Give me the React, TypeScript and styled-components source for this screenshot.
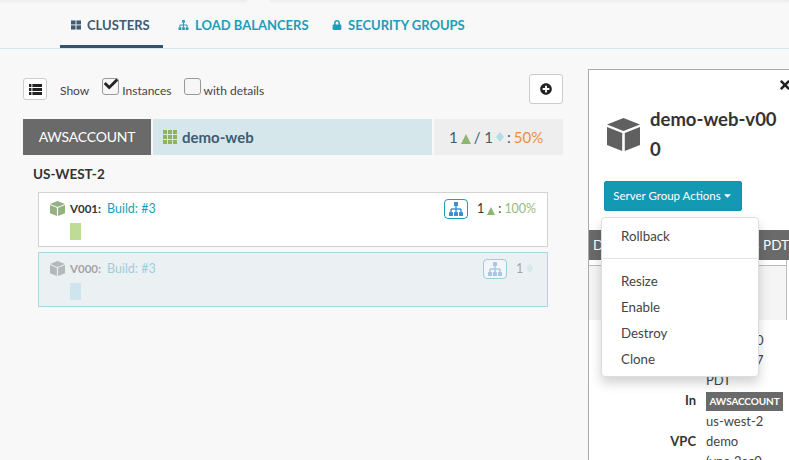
import React from "react";
import styled, { createGlobalStyle } from "styled-components";
import { FaLock, FaPlusCircle, FaTimes, FaCheck, FaCaretDown } from "react-icons/fa";

const Global = createGlobalStyle`
  html, body { margin: 0; padding: 0; height: 460px; overflow: hidden; background: #f8f8f8; }
  body { font-family: Lato, "Liberation Sans", sans-serif; color: #333; }
`;

const Page = styled.div`
  width: 789px;
  height: 460px;
  position: relative;
  overflow: hidden;
  display: flex;
  flex-direction: column;
  background: linear-gradient(#ececec 0, #f8f8f8 4px);
  &::before {
    content: "";
    position: absolute;
    left: 245px;
    top: 0;
    width: 27px;
    height: 3px;
    background: #f8f8f8;
    clip-path: polygon(3px 0, 24px 0, 100% 100%, 0 100%);
  }
`;

const Nav = styled.nav`
  height: 49px;
  box-sizing: border-box;
  flex: none;
  display: flex;
  padding-left: 60px;
  border-bottom: 1px solid #d3e7ee;
`;

const Tab = styled.a<{ $active?: boolean; $w: number }>`
  width: ${(p) => p.$w}px;
  height: 48px;
  box-sizing: border-box;
  margin-right: ${(p) => (p.$active ? 15 : 26)}px;
  padding: 17px 0 0 ${(p) => (p.$active ? 11 : 0)}px;
  display: flex;
  align-items: flex-start;
  gap: 6px;
  font-size: 13px;
  font-weight: 700;
  line-height: 16px;
  white-space: nowrap;
  color: ${(p) => (p.$active ? "#3f5b73" : "#1b9eb9")};
  border-bottom: ${(p) => (p.$active ? "3px solid #35536d" : "none")};
  svg { flex: none; margin-top: 3px; }
`;

const Body = styled.div`
  flex: 1;
  min-height: 0;
  display: flex;
`;

const Left = styled.div`
  width: 540px;
  margin-left: 23px;
  flex: none;
  padding-top: 25px;
`;

const Toolbar = styled.div`
  height: 30px;
  display: flex;
  align-items: center;
  font-size: 12px;
  color: #444;
`;

const IconButton = styled.button<{ $w: number; $h: number }>`
  width: ${(p) => p.$w}px;
  height: ${(p) => p.$h}px;
  padding: 0;
  display: flex;
  align-items: center;
  justify-content: center;
  background: #fff;
  border: 1px solid #ccc;
  border-radius: 3px;
  color: #222;
`;

const ShowLabel = styled.span`
  margin: 2px 0 0 13px;
`;

const CheckLabel = styled.label<{ $ml: number }>`
  display: flex;
  align-items: flex-start;
  margin-left: ${(p) => p.$ml}px;
`;

const Box = styled.span`
  width: 15px;
  height: 15px;
  display: block;
  background: #f6f6f6;
  border: 1px solid #999;
  border-radius: 3px;
  position: relative;
  top: -3px;
  svg { position: absolute; left: 1px; top: -2px; color: #222; }
`;

const CheckText = styled.span`
  margin-left: 3px;
  margin-top: 2px;
`;

const Spacer = styled.div`
  flex: 1;
`;

const HeaderRow = styled.div`
  margin-top: 15px;
  height: 36px;
  display: flex;
  gap: 2px;
`;

const Account = styled.div`
  width: 128px;
  background: #6a6a6a;
  color: #fff;
  font-size: 14px;
  line-height: 36px;
  text-align: center;
  letter-spacing: -0.2px;
`;

const AppName = styled.div`
  flex: 1;
  background: #d6e7ec;
  display: flex;
  align-items: center;
  gap: 5px;
  padding-left: 10px;
  font-size: 15px;
  font-weight: 700;
  color: #3f5b73;
`;

const Health = styled.div`
  width: 129px;
  box-sizing: border-box;
  background: #eeeeee;
  display: flex;
  align-items: center;
  gap: 3px;
  padding-left: 15px;
  font-size: 15px;
  color: #3f5b73;
`;

const Orange = styled.span`
  color: #ec8f3c;
`;

const Region = styled.div`
  margin: 10px 0 0 10px;
  font-size: 13.5px;
  font-weight: 700;
  line-height: 18px;
  color: #333;
`;

const Groups = styled.div`
  margin: 9px 15px 0;
  display: flex;
  flex-direction: column;
  gap: 5px;
`;

const Group = styled.div<{ $off?: boolean }>`
  height: 55px;
  box-sizing: border-box;
  padding: 7px 11px 0 11px;
  background: ${(p) => (p.$off ? "#ebf0f3" : "#fff")};
  border: 1px solid ${(p) => (p.$off ? "#a9d8e4" : "#d2d2d2")};
`;

const GroupTop = styled.div<{ $off?: boolean }>`
  height: 17px;
  display: flex;
  align-items: center;
  font-size: 12.5px;
  opacity: ${(p) => (p.$off ? 0.4 : 1)};
`;

const GroupName = styled.b`
  margin-left: 5px;
  font-weight: 700;
  font-size: 11.5px;
  color: #333;
`;

const BuildLink = styled.span`
  margin-left: 6px;
  color: #1b9eb9;
`;

const LbBadge = styled.span`
  width: 24px;
  height: 20px;
  box-sizing: border-box;
  display: flex;
  align-items: center;
  justify-content: center;
  border: 1px solid #1b9eb9;
  border-radius: 4px;
  color: #3d8fcf;
  background: #fff;
`;

const Count = styled.span<{ $w: number }>`
  width: ${(p) => p.$w}px;
  margin-left: 9px;
  display: flex;
  align-items: center;
  gap: 3px;
  white-space: nowrap;
  color: #333;
  svg { flex: none; }
`;

const Green = styled.span`
  color: #9ab981;
`;

const Instance = styled.div<{ $off?: boolean }>`
  margin: 6px 0 0 20px;
  width: 11px;
  height: 17px;
  background: ${(p) => (p.$off ? "#cfe5ed" : "#bfdc97")};
`;

const Panel = styled.aside`
  margin: 20px 0 0 25px;
  flex: 1;
  min-width: 0;
  position: relative;
  background: #fff;
  border: 1px solid #aaa;
  border-right: none;
  border-bottom: none;
  display: flex;
  flex-direction: column;
`;

const Close = styled.span`
  position: absolute;
  right: -3px;
  top: 8px;
  color: #222;
  line-height: 0;
`;

const PanelHead = styled.div`
  margin-top: 34px;
  display: flex;
  padding-left: 18px;
  gap: 10px;
  svg { flex: none; margin-top: 14px; }
`;

const Title = styled.h3`
  width: 129px;
  margin: 0;
  font-size: 18.5px;
  font-weight: 700;
  line-height: 30px;
  word-break: break-all;
  color: #333;
`;

const ActionButton = styled.button`
  margin: 17px 0 0 15px;
  width: 138px;
  height: 30px;
  flex: none;
  padding: 0 0 1px;
  border: 1px solid #1393ab;
  border-radius: 2px;
  background: #1499b3;
  color: #fff;
  font-family: inherit;
  font-size: 11.5px;
  display: flex;
  align-items: center;
  justify-content: center;
  gap: 1px;
`;

const Menu = styled.ul`
  position: absolute;
  left: 12px;
  top: 147px;
  width: 158px;
  box-sizing: border-box;
  height: 160px;
  margin: 0;
  padding: 6px 0 0;
  list-style: none;
  background: #fff;
  border: 1px solid #ddd;
  border-radius: 4px;
  box-shadow: 0 6px 12px rgba(0, 0, 0, 0.18);
  z-index: 2;
`;

const MenuItem = styled.li`
  height: 26px;
  padding-left: 19px;
  font-size: 13.3px;
  line-height: 25px;
  color: #444;
`;

const MenuDivider = styled.li`
  height: 1px;
  margin: 8px 0 10px;
  background: #e3e3e3;
`;

const SectionBar = styled.div`
  margin-top: 19px;
  height: 30px;
  flex: none;
  display: flex;
  justify-content: space-between;
  padding: 0 0 0 4px;
  background: #6a6a6a;
  color: #fff;
  font-size: 13.5px;
  line-height: 30px;
`;

const LightBlock = styled.div`
  height: 60px;
  flex: none;
  box-sizing: border-box;
  margin-right: 3px;
  background: #f5f5f5;
  border-top: 5px solid #fff;
  box-shadow: inset 0 1px 0 #bbb, 1px 0 0 #bbb;
`;

const Details = styled.dl`
  margin: 10px 0 0;
  display: grid;
  grid-template-columns: 107px 1fr;
  column-gap: 10px;
  font-size: 13px;
  line-height: 20px;
  color: #444;
`;

const Term = styled.dt`
  font-weight: 700;
  text-align: right;
  color: #333;
`;

const Value = styled.dd`
  margin: 0;
  white-space: nowrap;
`;

const Right = styled(Value)`
  padding-left: 50px;
`;

const Badge = styled.span`
  display: block;
  width: 77px;
  height: 19px;
  margin-top: 2px;
  background: #6a6a6a;
  color: #fff;
  font-size: 10px;
  font-weight: 700;
  letter-spacing: -0.1px;
  line-height: 19px;
  text-align: center;
`;

const Th = ({ size, color }: { size: number; color: string }) => (
  <svg width={size} height={size} viewBox="0 0 14 14" fill={color}>
    {[0, 5, 10].flatMap((y) =>
      [0, 5, 10].map((x) => <rect key={`${x}-${y}`} x={x} y={y} width="4" height="4" />)
    )}
  </svg>
);

const Large = () => (
  <svg width="10" height="10" viewBox="0 0 11 10" fill="currentColor">
    <rect width="5" height="4.4" />
    <rect x="6" width="5" height="4.4" />
    <rect y="5.4" width="5" height="4.6" />
    <rect x="6" y="5.4" width="5" height="4.6" />
  </svg>
);

const ListIcon = () => (
  <svg width="13" height="11" viewBox="0 0 13 11" fill="#222">
    {[0, 4, 8].map((y) => (
      <g key={y}>
        <rect y={y} width="2.4" height="3" />
        <rect x="3.4" y={y} width="9.6" height="3" />
      </g>
    ))}
  </svg>
);

const Sitemap = ({ w, h }: { w: number; h: number }) => (
  <svg width={w} height={h} viewBox="0 0 14 14" fill="currentColor">
    <rect x="5" y="0" width="4" height="4" rx="0.6" />
    <rect x="6.3" y="4" width="1.4" height="3" />
    <rect x="2" y="6.3" width="10" height="1.4" />
    <rect x="1.3" y="7" width="1.4" height="3" />
    <rect x="6.3" y="7" width="1.4" height="3" />
    <rect x="11.3" y="7" width="1.4" height="3" />
    <rect x="0" y="10" width="4" height="4" rx="0.6" />
    <rect x="5" y="10" width="4" height="4" rx="0.6" />
    <rect x="10" y="10" width="4" height="4" rx="0.6" />
  </svg>
);

const Cube = ({ size, color }: { size: number; color: string }) => (
  <svg width={size} height={size} viewBox="0 0 33 33" fill={color}>
    <path d="M16.5 0L33 6.5L16.5 13L0 6.5Z" />
    <path d="M0 9L15.2 15V33L0 27Z" />
    <path d="M33 9L17.8 15V33L33 27Z" />
  </svg>
);

const UpIcon = styled.svg`
  flex: none;
  position: relative;
  top: 2px;
`;

const Up = ({ w, h }: { w: number; h: number }) => (
  <UpIcon width={w} height={h} viewBox="0 0 10 10">
    <path d="M5 0L10 10H0Z" fill="#8fb573" />
  </UpIcon>
);

const Diamond = ({ w, h }: { w: number; h: number }) => (
  <svg width={w} height={h} viewBox="0 0 8 10">
    <path d="M4 0L8 5L4 10L0 5Z" fill="#b3dde6" />
  </svg>
);

export default function App() {
  return (
    <Page>
      <Global />
      <Nav>
        <Tab $active $w={103}>
          <Large />
          CLUSTERS
        </Tab>
        <Tab $w={128}>
          <Sitemap w={11} h={10} />
          LOAD BALANCERS
        </Tab>
        <Tab $w={140}>
          <FaLock size={10} />
          SECURITY GROUPS
        </Tab>
      </Nav>
      <Body>
        <Left>
          <Toolbar>
            <IconButton $w={24} $h={22}>
              <ListIcon />
            </IconButton>
            <ShowLabel>Show</ShowLabel>
            <CheckLabel $ml={13}>
              <Box>
                <FaCheck size={14} />
              </Box>
              <CheckText>Instances</CheckText>
            </CheckLabel>
            <CheckLabel $ml={12}>
              <Box />
              <CheckText>with details</CheckText>
            </CheckLabel>
            <Spacer />
            <IconButton $w={34} $h={30}>
              <FaPlusCircle size={12} />
            </IconButton>
          </Toolbar>
          <HeaderRow>
            <Account>AWSACCOUNT</Account>
            <AppName>
              <Th size={14} color="#8fb35f" />
              demo-web
            </AppName>
            <Health>
              1 <Up w={10} h={10} /> / 1 <Diamond w={8} h={10} /> : <Orange>50%</Orange>
            </Health>
          </HeaderRow>
          <Region>US-WEST-2</Region>
          <Groups>
            <Group>
              <GroupTop>
                <Cube size={15} color="#94b184" />
                <GroupName>V001:</GroupName>
                <BuildLink>Build: #3</BuildLink>
                <Spacer />
                <LbBadge>
                  <Sitemap w={14} h={14} />
                </LbBadge>
                <Count $w={59}>
                  1 <Up w={8} h={8} /> : <Green>100%</Green>
                </Count>
              </GroupTop>
              <Instance />
            </Group>
            <Group $off>
              <GroupTop $off>
                <Cube size={15} color="#666" />
                <GroupName>V000:</GroupName>
                <BuildLink>Build: #3</BuildLink>
                <Spacer />
                <LbBadge>
                  <Sitemap w={14} h={14} />
                </LbBadge>
                <Count $w={20}>
                  1 <Diamond w={8} h={9} />
                </Count>
              </GroupTop>
              <Instance $off />
            </Group>
          </Groups>
        </Left>
        <Panel>
          <Close>
            <FaTimes size={14} />
          </Close>
          <PanelHead>
            <Cube size={33} color="#606060" />
            <Title>demo-web-v000</Title>
          </PanelHead>
          <ActionButton>
            Server Group Actions
            <FaCaretDown size={11} />
          </ActionButton>
          <Menu>
            <MenuItem>Rollback</MenuItem>
            <MenuDivider />
            <MenuItem>Resize</MenuItem>
            <MenuItem>Enable</MenuItem>
            <MenuItem>Destroy</MenuItem>
            <MenuItem>Clone</MenuItem>
          </Menu>
          <SectionBar>
            <span>D</span>
            <span>8 PDT</span>
          </SectionBar>
          <LightBlock />
          <Details>
            <Term />
            <Right>0</Right>
            <Term />
            <Right>7</Right>
            <Term />
            <Value>PDT</Value>
            <Term>In</Term>
            <Value>
              <Badge>AWSACCOUNT</Badge>
            </Value>
            <Term />
            <Value>us-west-2</Value>
            <Term>VPC</Term>
            <Value>demo</Value>
            <Term />
            <Value>(vpc-2ac0</Value>
          </Details>
        </Panel>
      </Body>
    </Page>
  );
}
